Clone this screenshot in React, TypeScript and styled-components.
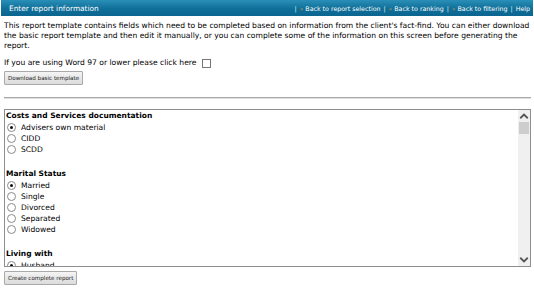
import styled, { createGlobalStyle } from "styled-components";

const GlobalStyle = createGlobalStyle`
  body {
    margin: 0;
    background: #ffffff;
    font-family: Verdana, "DejaVu Sans", sans-serif;
    color: #000;
  }
`;

const sections = [
  {
    title: "Costs and Services documentation",
    options: ["Advisers own material", "CIDD", "SCDD"],
  },
  {
    title: "Marital Status",
    options: ["Married", "Single", "Divorced", "Separated", "Widowed"],
  },
  {
    title: "Living with",
    options: ["Husband", "Wife", "Partner", "Alone"],
  },
];

export default function App() {
  return (
    <Page>
      <GlobalStyle />
      <TitleBar>
        <Title>Enter report information</Title>
        <NavLinks>
          <Sep>|</Sep>
          <NavLink><Arrow>«</Arrow> Back to report selection</NavLink>
          <Sep>|</Sep>
          <NavLink><Arrow>«</Arrow> Back to ranking</NavLink>
          <Sep>|</Sep>
          <NavLink><Arrow>«</Arrow> Back to filtering</NavLink>
          <Sep>|</Sep>
          <NavLink>Help</NavLink>
        </NavLinks>
      </TitleBar>

      <Body>
        <Intro>
          This report template contains fields which need to be completed based on
          information from the client's fact-find. You can either download the basic
          report template and then edit it manually, or you can complete some of the
          information on this screen before generating the report.
        </Intro>

        <WordRow>
          If you are using Word 97 or lower please click here
          <CheckBox type="checkbox" />
        </WordRow>

        <Button>Download basic template</Button>

        <Rule />

        <ScrollBox>
          <ScrollContent>
            {sections.map((s, i) => (
              <Section key={s.title}>
                <SectionTitle>{s.title}</SectionTitle>
                {s.options.map((o, j) => (
                  <Option key={o}>
                    <Radio type="radio" name={`s${i}`} defaultChecked={j === 0} />
                    {o}
                  </Option>
                ))}
              </Section>
            ))}
          </ScrollContent>
          <ScrollBar>
            <ScrollArrow viewBox="0 0 8 8">
              <path d="M1.5 5.5 L4 3 L6.5 5.5" fill="none" stroke="#555" strokeWidth="1.2" />
            </ScrollArrow>
            <Track>
              <Thumb />
            </Track>
            <ScrollArrow viewBox="0 0 8 8">
              <path d="M1.5 2.5 L4 5 L6.5 2.5" fill="none" stroke="#555" strokeWidth="1.2" />
            </ScrollArrow>
          </ScrollBar>
        </ScrollBox>

        <Button $top={4}>Create complete report</Button>
      </Body>
    </Page>
  );
}

const Page = styled.div`
  width: 534px;
  height: 288px;
  overflow: hidden;
`;

const TitleBar = styled.div`
  height: 16px;
  margin: 0 1px;
  display: flex;
  align-items: center;
  justify-content: space-between;
  background: linear-gradient(to bottom, #2a8fb8 0%, #0f6f98 55%, #0b6590 100%);
  color: #fff;
`;

const Title = styled.span`
  font-size: 7.4px;
  padding-left: 8px;
`;

const NavLinks = styled.div`
  display: flex;
  align-items: center;
  gap: 3px;
  font-size: 6.3px;
  padding-right: 3px;
`;

const NavLink = styled.span`
  color: #fff;
`;

const Arrow = styled.span`
  color: #c9a24a;
  font-size: 6px;
`;

const Sep = styled.span`
  color: #d8eef7;
`;

const Body = styled.div`
  padding: 0 3px 0 4px;
`;

const Intro = styled.p`
  margin: 5px 0 0;
  font-size: 7.6px;
  line-height: 10px;
`;

const WordRow = styled.div`
  margin-top: 7px;
  font-size: 7.6px;
  line-height: 10px;
  display: flex;
  align-items: center;
`;

const CheckBox = styled.input`
  width: 9px;
  height: 9px;
  margin: 0 0 0 6px;
  appearance: none;
  border: 1px solid #777;
  background: #fff;
`;

const Button = styled.button<{ $top?: number }>`
  display: block;
  margin-top: ${(p) => p.$top ?? 3}px;
  padding: 0 3px;
  height: 14px;
  font-family: Verdana, "DejaVu Sans", sans-serif;
  font-size: 5.6px;
  color: #222;
  border: 1px solid #a9a9a9;
  border-radius: 1px;
  background: linear-gradient(to bottom, #f4f4f4, #dcdcdc);
`;

const Rule = styled.hr`
  margin: 12px 0 10px;
  border: 0;
  border-top: 1px solid #a8a8a8;
  border-bottom: 1px solid #e0e0e0;
`;

const ScrollBox = styled.div`
  box-sizing: border-box;
  height: 158px;
  border: 1px solid #8e8e8e;
  display: flex;
  overflow: hidden;
`;

const ScrollContent = styled.div`
  flex: 1;
  overflow: hidden;
  font-size: 7.6px;
  line-height: 11px;
`;

const ScrollBar = styled.div`
  width: 12px;
  display: flex;
  flex-direction: column;
  background: #f0f0f0;
`;

const ScrollArrow = styled.svg`
  width: 12px;
  height: 12px;
  flex: none;
`;

const Track = styled.div`
  flex: 1;
  padding: 0 1px;
`;

const Thumb = styled.div`
  height: 12px;
  background: #cdcdcd;
`;

const Section = styled.div`
  padding: 0 0 13px 1px;
`;

const SectionTitle = styled.div`
  font-weight: bold;
  font-size: 7.5px;
  line-height: 12px;
`;

const Option = styled.label`
  display: flex;
  align-items: center;
  height: 11px;
`;

const Radio = styled.input`
  width: 9px;
  height: 9px;
  margin: 0 5px 0 1px;
  appearance: none;
  border: 1px solid #8a8a8a;
  border-radius: 50%;
  background: #fff;
  position: relative;

  &:checked::after {
    content: "";
    position: absolute;
    left: 2px;
    top: 2px;
    width: 3px;
    height: 3px;
    border-radius: 50%;
    background: #111;
  }
`;
